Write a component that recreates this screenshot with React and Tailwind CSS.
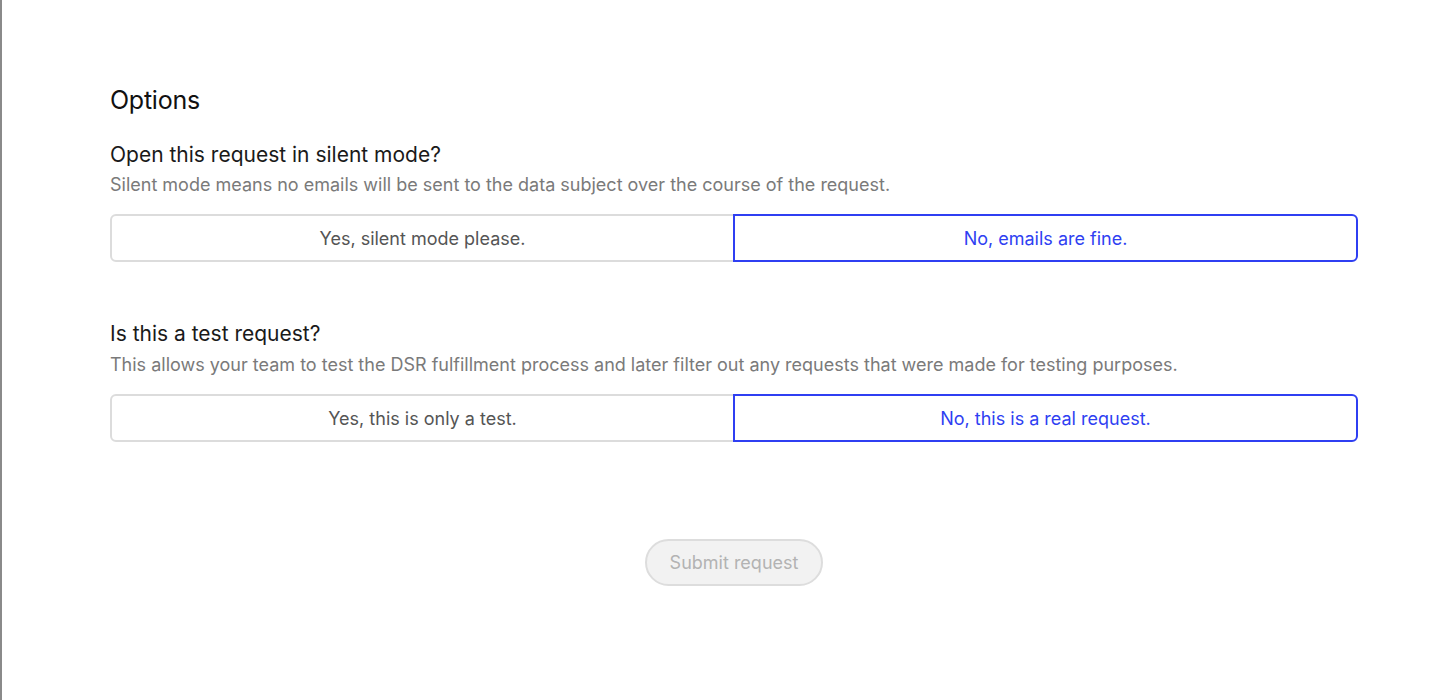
import { useState } from "react";

const Choice = ({ options, value, onChange }) => (
    <div className="flex w-full">
        {options.map((opt, i) => {
            const active = value === opt.value;
            const first = i === 0;
            return (
                <button
                    key={opt.value}
                    onClick={() => onChange(opt.value)}
                    className={`flex-1 h-[48px] border-2 text-[18px] tracking-[0em] ${first ? "rounded-l-[6px]" : "rounded-r-[6px]"} ${active ? "border-[#2f3ff2] text-[#2f3ff2] z-10" : "border-[#dcdcdc] text-[#555555]"} ${!first ? "-ml-[2px]" : ""} bg-white`}
                >
                    {opt.label}
                </button>
            );
        })}
    </div>
);

export default function App() {
    const [silent, setSilent] = useState("no");
    const [test, setTest] = useState("no");

    return (
        <div className="flex h-[700px] w-full bg-white font-['Inter',sans-serif] overflow-hidden">
            <div className="w-[2px] h-full bg-[#8a8a8a]" />
            <div className="flex-1 pl-[108px] pr-[98px] pt-[84px]">
                <h2 className="text-[25px] leading-[32px] text-[#111111] tracking-[-0.01em]">Options</h2>

                <div className="mt-[25px]">
                    <h3 className="text-[21px] leading-[28px] text-[#1a1a1a]">Open this request in silent mode?</h3>
                    <p className="mt-[3px] text-[18px] leading-[26px] text-[#7a7a7a]">
                        Silent mode means no emails will be sent to the data subject over the course of the request.
                    </p>
                    <div className="mt-[16px]">
                        <Choice
                            value={silent}
                            onChange={setSilent}
                            options={[
                                { value: "yes", label: "Yes, silent mode please." },
                                { value: "no", label: "No, emails are fine." },
                            ]}
                        />
                    </div>
                </div>

                <div className="mt-[58px]">
                    <h3 className="text-[21px] leading-[28px] text-[#1a1a1a]">Is this a test request?</h3>
                    <p className="mt-[4px] text-[18px] leading-[26px] text-[#7a7a7a]">
                        This allows your team to test the DSR fulfillment process and later filter out any requests that were made for testing purposes.
                    </p>
                    <div className="mt-[16px]">
                        <Choice
                            value={test}
                            onChange={setTest}
                            options={[
                                { value: "yes", label: "Yes, this is only a test." },
                                { value: "no", label: "No, this is a real request." },
                            ]}
                        />
                    </div>
                </div>

                <div className="flex justify-center mt-[97px]">
                    <button
                        disabled
                        className="h-[47px] px-[23px] rounded-full border-2 border-[#dddddd] bg-[#f2f2f2] text-[18px] text-[#b3b3b3]"
                    >
                        Submit request
                    </button>
                </div>
            </div>
        </div>
    );
}
